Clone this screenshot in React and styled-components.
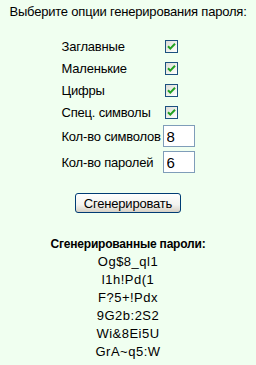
import styled, { createGlobalStyle } from 'styled-components';

const GlobalStyle = createGlobalStyle`
  html, body {
    margin: 0;
    padding: 0;
    background: #f0fff0;
  }
  body {
    font-family: "Liberation Sans", Arial, sans-serif;
    font-size: 13px;
    color: #000;
  }
`;

const Page = styled.div`
  width: 256px;
  min-height: 365px;
  padding-top: 4px;
  box-sizing: border-box;
  text-align: center;
`;

const Title = styled.p`
  margin: 0;
  line-height: 15px;
  letter-spacing: -0.2px;
`;

const OptionsTable = styled.div`
  display: grid;
  grid-template-columns: 101px 32px;
  grid-template-rows: repeat(4, 22px) 26px 26px;
  width: fit-content;
  margin: 16px auto 0;
  text-align: left;
`;

const Label = styled.div`
  display: flex;
  align-items: center;
  white-space: nowrap;
  letter-spacing: -0.2px;
`;

const Cell = styled.div`
  display: flex;
  align-items: center;
`;

const CheckBox = styled.span`
  display: inline-flex;
  align-items: center;
  justify-content: center;
  width: 11px;
  height: 11px;
  margin-left: 2px;
  border: 1px solid #1c5180;
  background: linear-gradient(135deg, #dcdcd7 0%, #f2f2ee 60%, #ffffff 100%);

  svg {
    display: block;
  }
`;

const NumberInput = styled.input`
  box-sizing: border-box;
  width: 32px;
  height: 22px;
  margin: 0;
  padding: 1px 3px;
  border: 1px solid #7f9db9;
  background: #fff;
  font-family: "Liberation Sans", Arial, sans-serif;
  font-size: 15px;
  color: #000;
  outline: none;
`;

const GenerateButton = styled.button`
  display: block;
  width: 106px;
  height: 20px;
  margin: 18px auto 0;
  padding: 0;
  border: 1px solid #003c74;
  border-radius: 3px;
  background: linear-gradient(180deg, #ffffff 0%, #f3f3ef 60%, #d6d0c5 100%);
  font-family: "Liberation Sans", Arial, sans-serif;
  font-size: 13px;
  letter-spacing: -0.2px;
  color: #000;
  line-height: 17px;
`;

const Results = styled.div`
  margin-top: 22px;
  line-height: 18px;
`;

const ResultsTitle = styled.div`
  font-weight: bold;
  font-size: 12px;
  letter-spacing: -0.2px;
`;

const Password = styled.div`
  letter-spacing: 0.5px;
`;

const Check = () => (
  <svg width="9" height="9" viewBox="0 0 9 9">
    <path d="M1 4.2 L3.3 6.6 L8 1.8" fill="none" stroke="#21a121" strokeWidth="2" />
  </svg>
);

const checkOptions = ['Заглавные', 'Маленькие', 'Цифры', 'Спец. символы'];
const countOptions = [
  { label: 'Кол-во символов', value: '8' },
  { label: 'Кол-во паролей', value: '6' },
];
const passwords = ['Og$8_ql1', 'l1h!Pd(1', 'F?5+!Pdx', '9G2b:2S2', 'Wi&8Ei5U', 'GrA~q5:W'];

export default function App() {
  return (
    <>
      <GlobalStyle />
      <Page>
        <Title>Выберите опции генерирования пароля:</Title>

        <OptionsTable>
          {checkOptions.flatMap((label) => [
            <Label key={label}>{label}</Label>,
            <Cell key={label + '-box'}>
              <CheckBox>
                <Check />
              </CheckBox>
            </Cell>,
          ])}
          {countOptions.flatMap((opt) => [
            <Label key={opt.label}>{opt.label}</Label>,
            <Cell key={opt.label + '-input'}>
              <NumberInput defaultValue={opt.value} />
            </Cell>,
          ])}
        </OptionsTable>

        <GenerateButton>Сгенерировать</GenerateButton>

        <Results>
          <ResultsTitle>Сгенерированные пароли:</ResultsTitle>
          {passwords.map((p) => (
            <Password key={p}>{p}</Password>
          ))}
        </Results>
      </Page>
    </>
  );
}
